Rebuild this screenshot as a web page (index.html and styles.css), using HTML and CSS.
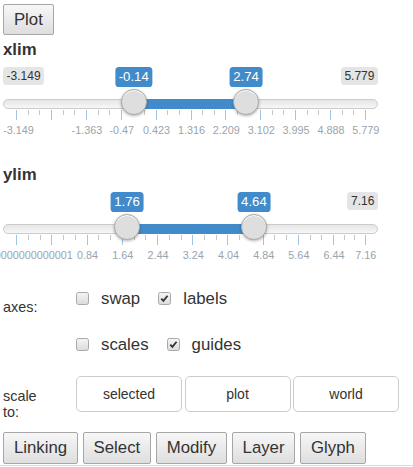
FILE: index.html
```
<!DOCTYPE html>
<html>
<head>
<meta charset="utf-8">
<link rel="stylesheet" href="styles.css">
</head>
<body>
<div class="top"><button class="btn">Plot</button></div>

<div class="field">
  <div class="field-label">xlim</div>
  <div class="irs">
    <span class="irs-line"></span>
    <span class="irs-bar" style="left:130.7px;width:112.4px"></span>
    <span class="irs-min">-3.149</span>
    <span class="irs-max">5.779</span>
    <span class="irs-from" style="left:130.7px">-0.14</span>
    <span class="irs-to" style="left:243.1px">2.74</span>
    <div class="irs-grid">
      <span class="pol" style="left:13.2px"></span><span class="pol small" style="left:24.82px"></span><span class="pol small" style="left:36.44px"></span>
      <span class="pol" style="left:48.06px"></span><span class="pol small" style="left:59.68px"></span><span class="pol small" style="left:71.3px"></span>
      <span class="pol" style="left:82.92px"></span><span class="pol small" style="left:94.54px"></span><span class="pol small" style="left:106.16px"></span>
      <span class="pol" style="left:117.78px"></span><span class="pol small" style="left:129.4px"></span><span class="pol small" style="left:141.02px"></span>
      <span class="pol" style="left:152.64px"></span><span class="pol small" style="left:164.26px"></span><span class="pol small" style="left:175.88px"></span>
      <span class="pol" style="left:187.5px"></span><span class="pol small" style="left:199.12px"></span><span class="pol small" style="left:210.74px"></span>
      <span class="pol" style="left:222.36px"></span><span class="pol small" style="left:233.98px"></span><span class="pol small" style="left:245.6px"></span>
      <span class="pol" style="left:257.22px"></span><span class="pol small" style="left:268.84px"></span><span class="pol small" style="left:280.46px"></span>
      <span class="pol" style="left:292.08px"></span><span class="pol small" style="left:303.7px"></span><span class="pol small" style="left:315.32px"></span>
      <span class="pol" style="left:326.94px"></span><span class="pol small" style="left:338.56px"></span><span class="pol small" style="left:350.18px"></span>
      <span class="pol" style="left:361.8px"></span>
      <span class="gt" style="left:14.5px">-3.149</span>
      <span class="gt" style="left:82.92px">-1.363</span>
      <span class="gt" style="left:117.78px">-0.47</span>
      <span class="gt" style="left:152.64px">0.423</span>
      <span class="gt" style="left:187.5px">1.316</span>
      <span class="gt" style="left:222.36px">2.209</span>
      <span class="gt" style="left:257.22px">3.102</span>
      <span class="gt" style="left:292.08px">3.995</span>
      <span class="gt" style="left:326.94px">4.888</span>
      <span class="gt" style="left:361.8px">5.779</span>
    </div>
    <span class="irs-handle" style="left:130.7px"></span>
    <span class="irs-handle" style="left:243.1px"></span>
  </div>
</div>

<div class="field">
  <div class="field-label">ylim</div>
  <div class="irs">
    <span class="irs-line"></span>
    <span class="irs-bar" style="left:124.1px;width:126.8px"></span>
    <span class="irs-max">7.16</span>
    <span class="irs-from" style="left:124.1px">1.76</span>
    <span class="irs-to" style="left:250.9px">4.64</span>
    <div class="irs-grid">
      <span class="pol" style="left:13.2px"></span><span class="pol small" style="left:24.94px"></span><span class="pol small" style="left:36.67px"></span>
      <span class="pol" style="left:48.41px"></span><span class="pol small" style="left:60.15px"></span><span class="pol small" style="left:71.88px"></span>
      <span class="pol" style="left:83.62px"></span><span class="pol small" style="left:95.36px"></span><span class="pol small" style="left:107.09px"></span>
      <span class="pol" style="left:118.83px"></span><span class="pol small" style="left:130.57px"></span><span class="pol small" style="left:142.3px"></span>
      <span class="pol" style="left:154.04px"></span><span class="pol small" style="left:165.78px"></span><span class="pol small" style="left:177.51px"></span>
      <span class="pol" style="left:189.25px"></span><span class="pol small" style="left:200.99px"></span><span class="pol small" style="left:212.72px"></span>
      <span class="pol" style="left:224.46px"></span><span class="pol small" style="left:236.2px"></span><span class="pol small" style="left:247.93px"></span>
      <span class="pol" style="left:259.67px"></span><span class="pol small" style="left:271.41px"></span><span class="pol small" style="left:283.14px"></span>
      <span class="pol" style="left:294.88px"></span><span class="pol small" style="left:306.62px"></span><span class="pol small" style="left:318.35px"></span>
      <span class="pol" style="left:330.09px"></span><span class="pol small" style="left:340.66px"></span><span class="pol small" style="left:351.23px"></span>
      <span class="pol" style="left:361.8px"></span>
      <span class="gt" style="left:14.5px">-0.7600000000000001</span>
      <span class="gt" style="left:83.62px">0.84</span>
      <span class="gt" style="left:118.83px">1.64</span>
      <span class="gt" style="left:154.04px">2.44</span>
      <span class="gt" style="left:189.25px">3.24</span>
      <span class="gt" style="left:224.46px">4.04</span>
      <span class="gt" style="left:259.67px">4.84</span>
      <span class="gt" style="left:294.88px">5.64</span>
      <span class="gt" style="left:330.09px">6.44</span>
      <span class="gt" style="left:361.8px">7.16</span>
    </div>
    <span class="irs-handle" style="left:124.1px"></span>
    <span class="irs-handle" style="left:250.9px"></span>
  </div>
</div>

<div class="opt-row">
  <div class="opt-label">axes:</div>
  <div class="opt-lines">
    <div class="opt-line">
      <span class="cb-item"><span class="cb"></span>swap</span>
      <span class="cb-item"><span class="cb checked"><svg viewBox="0 0 13 13" width="13" height="13"><path d="M3.3 6.6 L5.4 8.9 L9.6 3.8" fill="none" stroke="#333" stroke-width="1.8"/></svg></span>labels</span>
    </div>
    <div class="opt-line">
      <span class="cb-item"><span class="cb"></span>scales</span>
      <span class="cb-item"><span class="cb checked"><svg viewBox="0 0 13 13" width="13" height="13"><path d="M3.3 6.6 L5.4 8.9 L9.6 3.8" fill="none" stroke="#333" stroke-width="1.8"/></svg></span>guides</span>
    </div>
  </div>
</div>

<div class="scale-row">
  <div class="scale-label">scale<br>to:</div>
  <div class="seg">
    <button class="seg-btn">selected</button>
    <button class="seg-btn">plot</button>
    <button class="seg-btn">world</button>
  </div>
</div>

<div class="bottom-row">
  <button class="btn">Linking</button>
  <button class="btn">Select</button>
  <button class="btn">Modify</button>
  <button class="btn">Layer</button>
  <button class="btn">Glyph</button>
</div>
<div class="footer-line"></div>
</body>
</html>
```

FILE: styles.css
```
html, body {
  margin: 0;
  padding: 0;
  overflow: hidden;
}
body {
  font-family: "Liberation Sans", Arial, sans-serif;
  color: #333;
  background: #fff;
  width: 413px;
  height: 467px;
}
.top {
  padding: 4px 0 0 3px;
  height: 31px;
}
.btn {
  display: block;
  box-sizing: border-box;
  height: 31.5px;
  padding: 0 9.9px;
  font-family: "Liberation Sans", Arial, sans-serif;
  font-size: 16.8px;
  color: #333;
  border: 1px solid #a6a6a6;
  border-radius: 2px;
  background: linear-gradient(to bottom, #f7f7f7, #dedede);
}
.top .btn { height: 31px; }
.field-label {
  font-weight: bold;
  font-size: 16.8px;
  line-height: 20px;
  margin: 4.5px 0 0 3px;
}
.field + .field .field-label { margin-top: 25px; }

.irs {
  position: relative;
  height: 80px;
  margin: 0 35px 0 3px;
}
.irs-line {
  position: absolute;
  left: 0;
  right: 0;
  top: 39.5px;
  height: 10px;
  box-sizing: border-box;
  border: 1px solid #ccc;
  border-radius: 10px;
  background: linear-gradient(to bottom, #ddd -50%, #fff 150%);
}
.irs-bar {
  position: absolute;
  top: 39.5px;
  height: 10px;
  background: #428bca;
}
.irs-handle {
  position: absolute;
  top: 29.5px;
  width: 26.4px;
  height: 26.4px;
  margin-left: -13.2px;
  box-sizing: border-box;
  border: 1px solid #ababab;
  border-radius: 50%;
  background: #dedede;
  box-shadow: inset 0 1px 0 #fff, 0 1px 3px rgba(0,0,0,0.3);
}
.irs-min, .irs-max {
  position: absolute;
  top: 7.5px;
  font-size: 12px;
  line-height: 16px;
  padding: 1.2px 3.6px;
  color: #333;
  background: rgba(0,0,0,0.1);
  border-radius: 3.6px;
}
.irs-min { left: 0; }
.irs-max { right: 0; }
.irs-from, .irs-to {
  position: absolute;
  top: 7.5px;
  font-size: 13.2px;
  line-height: 17.6px;
  padding: 1.2px 3.6px;
  color: #fff;
  background: #428bca;
  border-radius: 3.6px;
  transform: translateX(-50%);
  white-space: nowrap;
}
.irs-grid {
  position: absolute;
  left: 0;
  right: 0;
  top: 50.5px;
  height: 28px;
}
.pol {
  position: absolute;
  top: 0;
  width: 1px;
  height: 9.6px;
  background: rgba(66,139,202,0.5);
}
.pol.small {
  height: 4.8px;
  background: rgba(153,153,153,0.55);
}
.gt {
  position: absolute;
  top: 14.8px;
  font-size: 10.8px;
  line-height: 10.8px;
  color: #99a4ac;
  white-space: nowrap;
  transform: translateX(calc(-50% + 1px));
}

.opt-row {
  display: flex;
  margin: 21px 0 0 3px;
}
.opt-label {
  width: 73px;
  font-size: 14.4px;
  line-height: 17px;
  padding-top: 13.2px;
}
.opt-lines {
  display: flex;
  flex-direction: column;
  gap: 20px;
}
.opt-line {
  display: flex;
  align-items: center;
  height: 26px;
  font-size: 16.8px;
}
.cb-item {
  display: flex;
  align-items: center;
  margin-right: 18px;
}
.cb {
  display: block;
  width: 13px;
  height: 13px;
  margin-right: 12px;
  box-sizing: border-box;
  border: 1px solid #a9a9a9;
  border-radius: 2.5px;
  background: linear-gradient(to bottom, #f4f4f4, #dcdcdc);
  position: relative;
}
.cb svg {
  position: absolute;
  left: -1px;
  top: -1px;
}

.scale-row {
  display: flex;
  align-items: flex-start;
  margin: 18.5px 0 0 3px;
}
.scale-label {
  width: 73px;
  font-size: 14.4px;
  line-height: 16px;
  padding-top: 12.2px;
}
.seg {
  display: flex;
  gap: 2.5px;
}
.seg-btn {
  width: 106px;
  height: 36px;
  box-sizing: border-box;
  border: 1px solid #ccc;
  border-radius: 5px;
  background: #fff;
  font-family: "Liberation Sans", Arial, sans-serif;
  font-size: 14px;
  color: #333;
  padding: 0;
}

.bottom-row {
  display: flex;
  gap: 4.7px;
  margin: 11.8px 0 0 3px;
}
.bottom-row .btn { height: 32px; }
.footer-line {
  margin-top: 1px;
  border-top: 1px solid #ddd;
}
```
